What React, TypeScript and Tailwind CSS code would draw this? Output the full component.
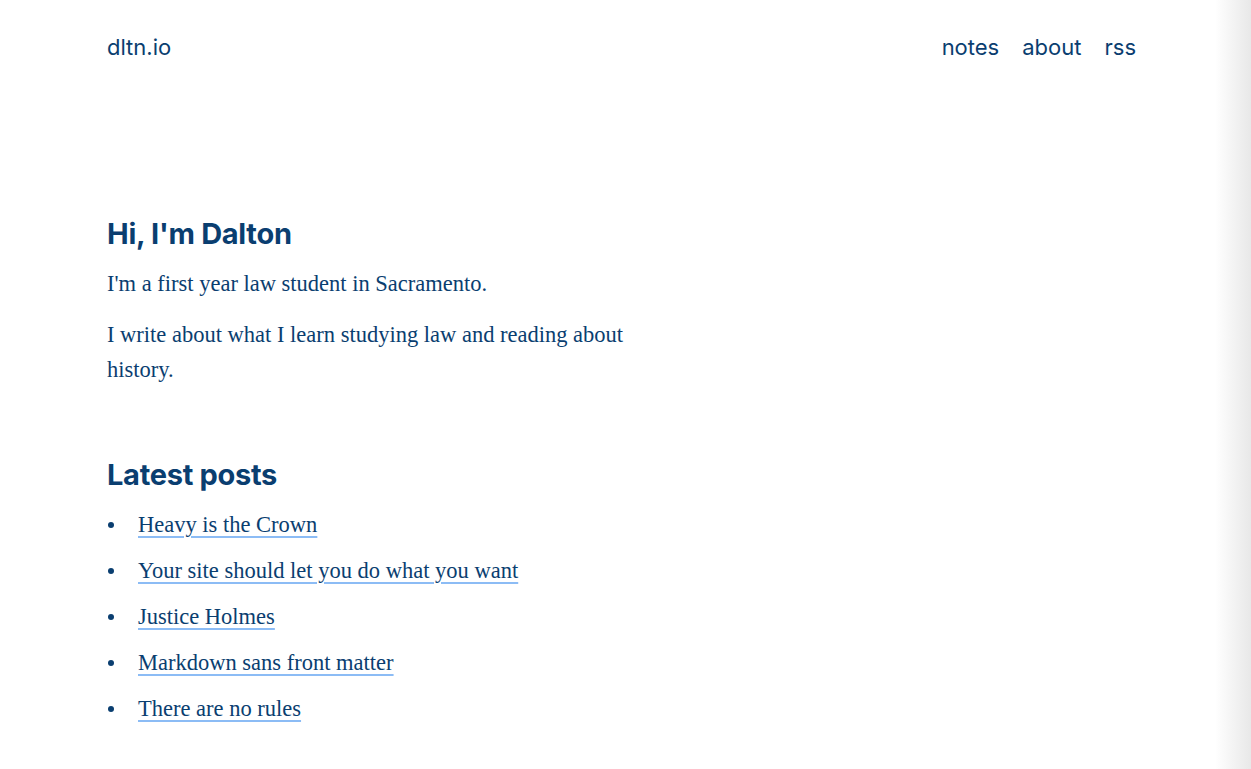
import React from 'react'

const posts = [
  'Heavy is the Crown',
  'Your site should let you do what you want',
  'Justice Holmes',
  'Markdown sans front matter',
  'There are no rules',
]

const sans = 'font-[Inter,"Liberation_Sans",sans-serif]'
const serif = 'font-["Liberation_Serif",serif]'

export default function App() {
  return (
    <div className="flex min-h-[769px] bg-white text-[#0a3e70]">
      <div className="flex-1 pl-[107px] pr-[79px]">
        {/* Header */}
        <header className={`flex items-center justify-between pt-[33px] text-[22px] ${sans}`}>
          <a href="#" className="leading-[28px]">dltn.io</a>
          <nav className="flex gap-[23px] leading-[28px]">
            <a href="#">notes</a>
            <a href="#">about</a>
            <a href="#">rss</a>
          </nav>
        </header>

        <main className="pt-[155px]">
          <section className="max-w-[560px]">
            <h1 className={`text-[29px] font-bold leading-[36px] tracking-[-0.01em] ${sans}`}>Hi, I'm Dalton</h1>
            <p className={`mt-[14px] text-[22.5px] leading-[35px] ${serif}`}>I'm a first year law student in Sacramento.</p>
            <p className={`mt-[16px] text-[22.5px] leading-[35px] ${serif}`}>
              I write about what I learn studying law and reading about history.
            </p>
          </section>

          <section className="mt-[70px]">
            <h2 className={`text-[29px] font-bold leading-[36px] tracking-[-0.01em] ${sans}`}>Latest posts</h2>
            <ul className={`mt-[14px] flex flex-col gap-[11px] text-[22.5px] leading-[35px] ${serif}`}>
              {posts.map((p) => (
                <li key={p} className="flex items-center">
                  <span className="ml-[1px] mr-[24px] h-[6px] w-[6px] rounded-full bg-[#0a3e70]" />
                  <a
                    href="#"
                    className="underline decoration-[#8cbcf5] decoration-2 underline-offset-[4px]"
                  >
                    {p}
                  </a>
                </li>
              ))}
            </ul>
          </section>
        </main>
      </div>
      {/* right edge shade */}
      <div className="w-[36px] bg-gradient-to-r from-white to-[#e8e8e8]" />
    </div>
  )
}
